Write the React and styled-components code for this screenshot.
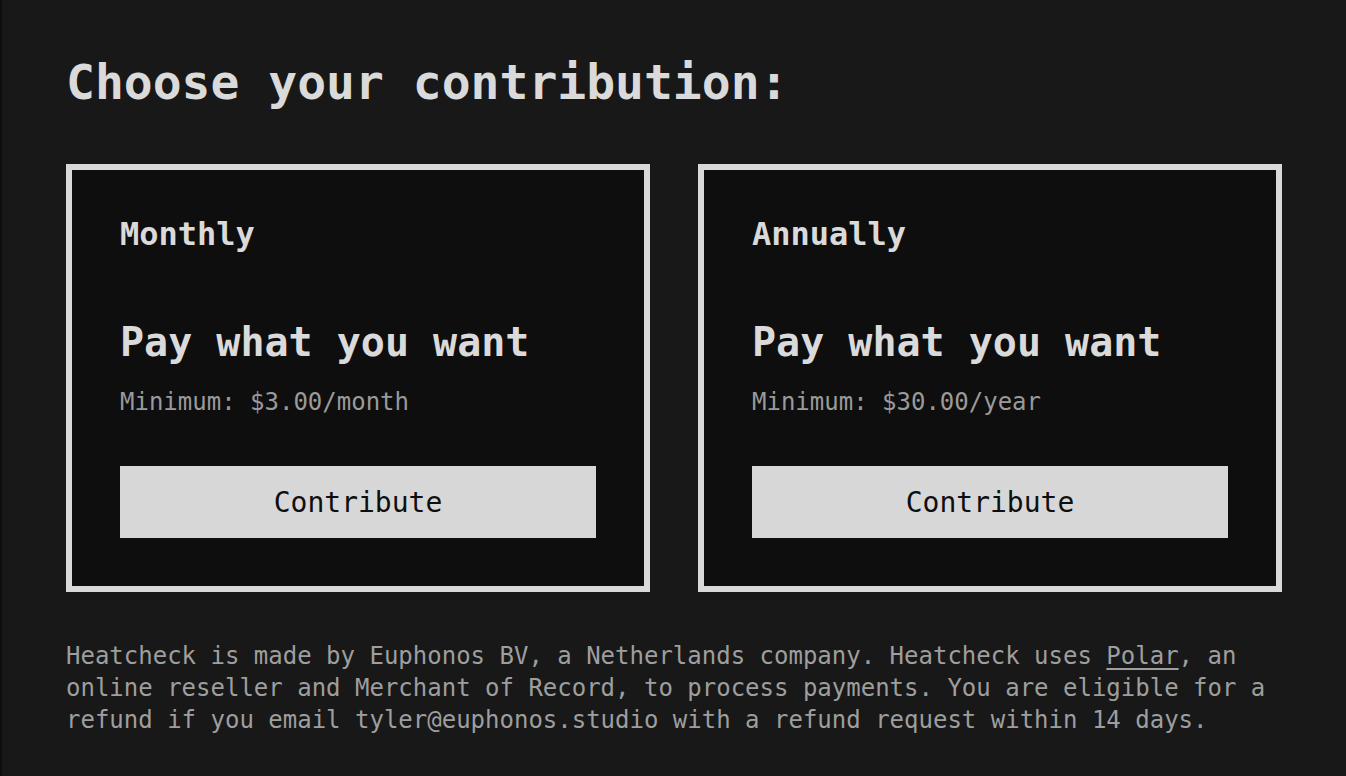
import React from 'react';
import styled, { createGlobalStyle } from 'styled-components';

const GlobalStyle = createGlobalStyle`
  html, body {
    margin: 0;
    padding: 0;
    background-color: #181818;
  }
  * {
    box-sizing: border-box;
  }
`;

const Page = styled.div`
  min-height: 100vh;
  background-color: #181818;
  border-left: 2px solid #0e0e0e;
  padding: 54px 64px 40px 64px;
  font-family: "DejaVu Sans Mono", "Liberation Mono", monospace;
  color: #dadada;
`;

const Title = styled.h1`
  margin: 0 0 54px 0;
  font-size: 48px;
  line-height: 56px;
  font-weight: 700;
  color: #dadada;
`;

const Plans = styled.div`
  display: grid;
  grid-template-columns: 1fr 1fr;
  gap: 48px;
`;

const Card = styled.div`
  background-color: #0e0e0e;
  border: 6px solid #d9d9d9;
  padding: 48px;
  display: flex;
  flex-direction: column;
`;

const Period = styled.h2`
  margin: 0 0 72px 0;
  font-size: 32px;
  line-height: 32px;
  font-weight: 700;
  color: #dadada;
`;

const Price = styled.div`
  margin-bottom: 28px;
  font-size: 40px;
  line-height: 40px;
  font-weight: 700;
  color: #dadada;
`;

const Minimum = styled.div`
  margin-bottom: 52px;
  font-size: 24px;
  line-height: 24px;
  color: #9a9a9a;
`;

const Button = styled.button`
  height: 72px;
  width: 100%;
  border: none;
  border-radius: 0;
  background-color: #d7d7d7;
  color: #0e0e0e;
  font-family: inherit;
  font-size: 28px;
  cursor: pointer;
`;

const Footer = styled.p`
  margin: 48px 0 0 0;
  font-size: 24px;
  line-height: 32px;
  color: #9e9e9e;
`;

const Link = styled.a`
  color: inherit;
  text-decoration: underline;
  text-underline-offset: 4px;
`;

const plans = [
  { period: 'Monthly', minimum: '$3.00/month' },
  { period: 'Annually', minimum: '$30.00/year' },
];

const App = () => (
  <>
    <GlobalStyle />
    <Page>
      <Title>Choose your contribution:</Title>
      <Plans>
        {plans.map((plan) => (
          <Card key={plan.period}>
            <Period>{plan.period}</Period>
            <Price>Pay what you want</Price>
            <Minimum>Minimum: {plan.minimum}</Minimum>
            <Button>Contribute</Button>
          </Card>
        ))}
      </Plans>
      <Footer>
        Heatcheck is made by Euphonos BV, a Netherlands company. Heatcheck uses{' '}
        <Link href="#">Polar</Link>, an online reseller and Merchant of Record, to process
        payments. You are eligible for a refund if you email tyler@euphonos.studio with a
        refund request within 14 days.
      </Footer>
    </Page>
  </>
);

export default App;
